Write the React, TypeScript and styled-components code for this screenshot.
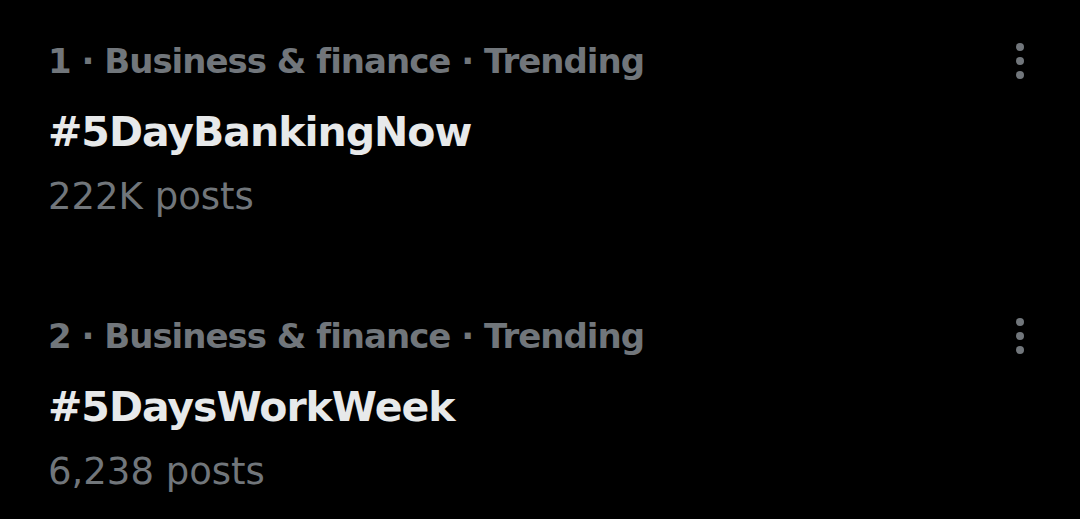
import * as React from 'react';
import styled, { createGlobalStyle } from 'styled-components';

const GlobalStyle = createGlobalStyle`
  html, body {
    margin: 0;
    padding: 0;
    background: #000;
  }
  body {
    font-family: "DejaVu Sans", "Open Sans", sans-serif;
  }
`;

interface Trend {
  rank: number;
  category: string;
  name: string;
  posts: string;
}

const trends: Trend[] = [
  { rank: 1, category: 'Business & finance', name: '#5DayBankingNow', posts: '222K posts' },
  { rank: 2, category: 'Business & finance', name: '#5DaysWorkWeek', posts: '6,238 posts' },
];

const Page = styled.div`
  width: 1080px;
  height: 519px;
  background: #000;
  overflow: hidden;
`;

const Item = styled.div`
  display: flex;
  justify-content: space-between;
  align-items: flex-start;
  height: 275px;
  padding: 0 48px;
  box-sizing: border-box;
`;

const Body = styled.div`
  display: flex;
  flex-direction: column;
`;

const Meta = styled.div`
  margin-top: 39px;
  font-size: 34px;
  line-height: 44px;
  font-weight: 700;
  letter-spacing: -1px;
  color: #71767b;
`;

const Title = styled.div`
  margin-top: 24px;
  font-size: 41px;
  line-height: 50px;
  font-weight: 700;
  letter-spacing: -1px;
  color: #e7e9ea;
`;

const Count = styled.div`
  margin-top: 18px;
  font-size: 37px;
  line-height: 44px;
  font-weight: 400;
  color: #71767b;
`;

const MoreButton = styled.div`
  margin-top: 43px;
  margin-right: 8px;
  display: flex;
  flex-direction: column;
  gap: 6px;
`;

const Dot = styled.span`
  width: 8px;
  height: 8px;
  border-radius: 50%;
  background: #71767b;
`;

export default function App() {
  return (
    <Page>
      <GlobalStyle />
      {trends.map(t => (
        <Item key={t.rank}>
          <Body>
            <Meta>{t.rank} · {t.category} · Trending</Meta>
            <Title>{t.name}</Title>
            <Count>{t.posts}</Count>
          </Body>
          <MoreButton>
            <Dot />
            <Dot />
            <Dot />
          </MoreButton>
        </Item>
      ))}
    </Page>
  );
}
